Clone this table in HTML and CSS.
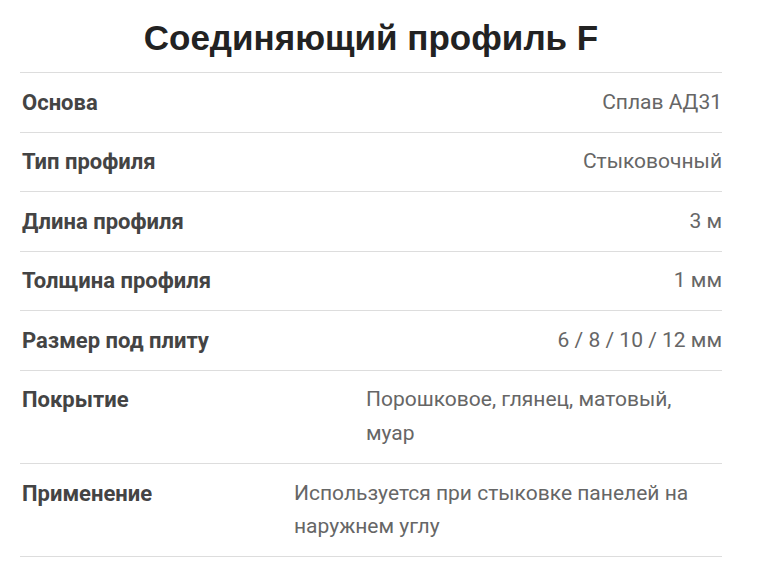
FILE: index.html
```html
<!DOCTYPE html>
<html lang="ru">
<head>
<meta charset="utf-8">
<link rel="stylesheet" href="styles.css">
</head>
<body>
<div class="page">
  <h1 class="title">Соединяющий профиль F</h1>
  <div class="specs">
    <div class="row"><div class="label">Основа</div><div class="value">Сплав АД31</div></div>
    <div class="row"><div class="label">Тип профиля</div><div class="value">Стыковочный</div></div>
    <div class="row"><div class="label">Длина профиля</div><div class="value">3 м</div></div>
    <div class="row"><div class="label">Толщина профиля</div><div class="value">1 мм</div></div>
    <div class="row"><div class="label">Размер под плиту</div><div class="value">6 / 8 / 10 / 12 мм</div></div>
    <div class="row"><div class="label">Покрытие</div><div class="value value-wrap value-356">Порошковое, глянец, матовый, муар</div></div>
    <div class="row"><div class="label">Применение</div><div class="value value-wrap value-428">Используется при стыковке панелей на наружнем углу</div></div>
  </div>
</div>
</body>
</html>
```

FILE: styles.css
```css
html, body {
  margin: 0;
  padding: 0;
  background: #fff;
}
body {
  font-family: Roboto, "Liberation Sans", sans-serif;
}
.page {
  width: 702px;
  padding-left: 20px;
}
.title {
  margin: 0;
  padding: 19px 0 15px;
  font-family: "Liberation Sans", Arial, sans-serif;
  font-size: 35px;
  line-height: 38px;
  font-weight: 700;
  color: #222;
  text-align: center;
}
.specs {
  border-top: 1px solid #ddd;
}
.row {
  display: flex;
  justify-content: space-between;
  align-items: flex-start;
  padding: 12.5px 0;
  border-bottom: 1px solid #ddd;
  line-height: 33.6px;
}
.label {
  font-size: 22px;
  font-weight: 700;
  color: #444;
  padding-left: 2px;
}
.value {
  font-size: 21px;
  color: #666;
  text-align: right;
}
.value-wrap {
  box-sizing: border-box;
  text-align: left;
  padding-right: 8px;
}
.value-356 { width: 356px; }
.value-428 { width: 428px; }
```
